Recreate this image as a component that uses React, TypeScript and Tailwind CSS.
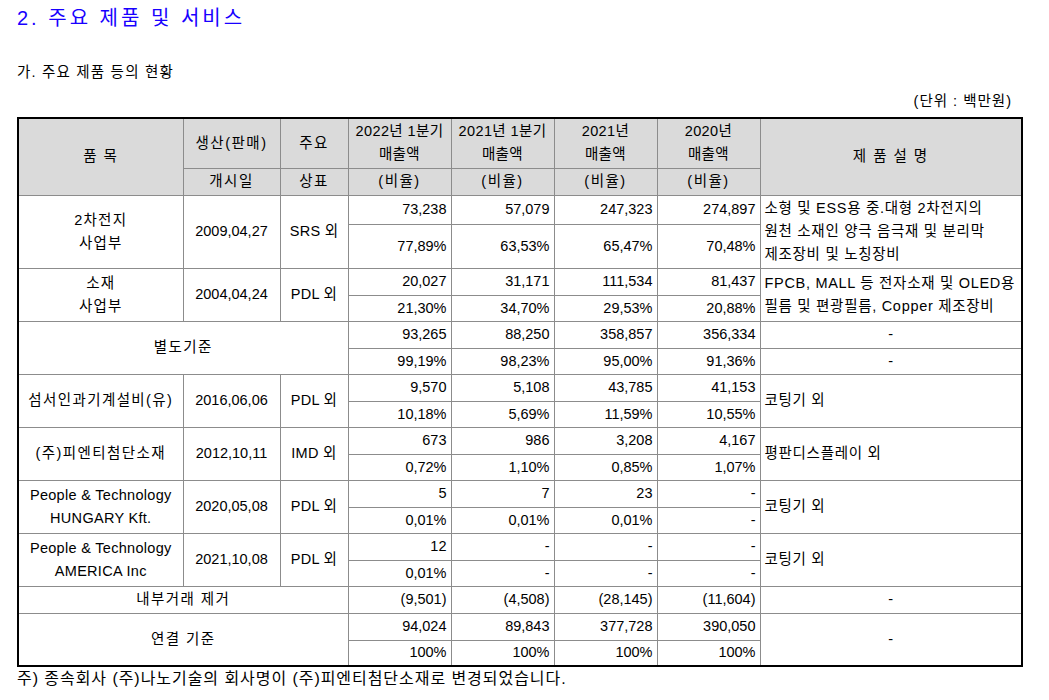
import React from 'react';

type Group = {
  name: React.ReactNode;
  nameTrack: string;
  date: string;
  brand: string;
  sales: string[];
  ratio: string[];
  desc: React.ReactNode;
  heights: [string, string];
};

const cell = 'border border-[#8c8c8c] px-[4px] leading-[23px] whitespace-nowrap';
const head = `${cell} bg-[#dadada] text-center font-normal`;
const num = `${cell} text-right`;

const groups: Group[] = [
  {
    name: <>2차전지<br />사업부</>,
    nameTrack: 'tracking-[1.2px]',
    date: '2009,04,27',
    brand: 'SRS 외',
    sales: ['73,238', '57,079', '247,323', '274,897'],
    ratio: ['77,89%', '63,53%', '65,47%', '70,48%'],
    desc: <>소형 및 ESS용 중.대형 2차전지의<br />원천 소재인 양극 음극재 및 분리막<br />제조장비 및 노칭장비</>,
    heights: ['h-[29px]', 'h-[44px]'],
  },
  {
    name: <>소재<br />사업부</>,
    nameTrack: 'tracking-[1.2px]',
    date: '2004,04,24',
    brand: 'PDL 외',
    sales: ['20,027', '31,171', '111,534', '81,437'],
    ratio: ['21,30%', '34,70%', '29,53%', '20,88%'],
    desc: <>FPCB, MALL 등 전자소재 및 OLED용<br />필름 및 편광필름, Copper 제조장비</>,
    heights: ['h-[27px]', 'h-[26px]'],
  },
];

const subs: Group[] = [
  {
    name: '섬서인과기계설비(유)',
    nameTrack: 'tracking-[1.4px]',
    date: '2016,06,06',
    brand: 'PDL 외',
    sales: ['9,570', '5,108', '43,785', '41,153'],
    ratio: ['10,18%', '5,69%', '11,59%', '10,55%'],
    desc: '코팅기 외',
    heights: ['h-[27px]', 'h-[26px]'],
  },
  {
    name: '(주)피엔티첨단소재',
    nameTrack: 'tracking-[1.4px]',
    date: '2012,10,11',
    brand: 'IMD 외',
    sales: ['673', '986', '3,208', '4,167'],
    ratio: ['0,72%', '1,10%', '0,85%', '1,07%'],
    desc: '평판디스플레이 외',
    heights: ['h-[27px]', 'h-[26px]'],
  },
  {
    name: <>People &amp; Technology<br />HUNGARY Kft.</>,
    nameTrack: 'tracking-[0.3px]',
    date: '2020,05,08',
    brand: 'PDL 외',
    sales: ['5', '7', '23', '-'],
    ratio: ['0,01%', '0,01%', '0,01%', '-'],
    desc: '코팅기 외',
    heights: ['h-[27px]', 'h-[26px]'],
  },
  {
    name: <>People &amp; Technology<br />AMERICA Inc</>,
    nameTrack: 'tracking-[0.3px]',
    date: '2021,10,08',
    brand: 'PDL 외',
    sales: ['12', '-', '-', '-'],
    ratio: ['0,01%', '-', '-', '-'],
    desc: '코팅기 외',
    heights: ['h-[27px]', 'h-[26px]'],
  },
];

function GroupRows({ g }: { g: Group }) {
  return (
    <>
      <tr className={g.heights[0]}>
        <td rowSpan={2} className={`${cell} text-center ${g.nameTrack}`}>{g.name}</td>
        <td rowSpan={2} className={`${cell} text-center`}>{g.date}</td>
        <td rowSpan={2} className={`${cell} text-center tracking-[0.3px]`}>{g.brand}</td>
        {g.sales.map((v, i) => (
          <td key={i} className={num}>{v}</td>
        ))}
        <td rowSpan={2} className={`${cell} text-left tracking-[0.7px]`}>{g.desc}</td>
      </tr>
      <tr className={g.heights[1]}>
        {g.ratio.map((v, i) => (
          <td key={i} className={num}>{v}</td>
        ))}
      </tr>
    </>
  );
}

export default function App() {
  return (
    <div className="min-h-[700px] bg-white pl-[17px] font-['Liberation_Sans','Noto_Sans_CJK_KR',sans-serif] text-[14.5px] text-black">
      <h2 className="pt-[6px] text-[20px] leading-[24px] tracking-[3px] text-[#1800ff]">
        2. 주요 제품 및 서비스
      </h2>

      <p className="mt-[32px] leading-[20px] tracking-[1.2px]">가. 주요 제품 등의 현황</p>

      <p className="mt-[9px] w-[1004px] pr-[9px] text-right leading-[20px] tracking-[1px]">(단위 : 백만원)</p>

      <table className="mt-[6px] w-[1004px] table-fixed border-collapse border-2 border-black">
        <colgroup>
          <col className="w-[165px]" />
          <col className="w-[97px]" />
          <col className="w-[68px]" />
          <col className="w-[103px]" />
          <col className="w-[103px]" />
          <col className="w-[103px]" />
          <col className="w-[103px]" />
          <col className="w-[262px]" />
        </colgroup>
        <thead>
          <tr className="h-[50px]">
            <th rowSpan={2} className={`${head} tracking-[1.5px]`}>품 목</th>
            <th className={`${head} tracking-[1.5px]`}>생산(판매)</th>
            <th className={`${head} tracking-[1.5px]`}>주요</th>
            <th className={`${head} tracking-[0.4px]`}>2022년 1분기<br />매출액</th>
            <th className={`${head} tracking-[0.4px]`}>2021년 1분기<br />매출액</th>
            <th className={`${head} tracking-[0.4px]`}>2021년<br />매출액</th>
            <th className={`${head} tracking-[0.4px]`}>2020년<br />매출액</th>
            <th rowSpan={2} className={`${head} tracking-[1.5px]`}>제 품 설 명</th>
          </tr>
          <tr className="h-[27px]">
            <th className={`${head} tracking-[1.5px]`}>개시일</th>
            <th className={`${head} tracking-[1.5px]`}>상표</th>
            <th className={`${head} tracking-[1.5px]`}>(비율)</th>
            <th className={`${head} tracking-[1.5px]`}>(비율)</th>
            <th className={`${head} tracking-[1.5px]`}>(비율)</th>
            <th className={`${head} tracking-[1.5px]`}>(비율)</th>
          </tr>
        </thead>
        <tbody>
          {groups.map((g, i) => (
            <GroupRows key={i} g={g} />
          ))}

          {/* 별도기준 */}
          <tr className="h-[27px]">
            <td rowSpan={2} colSpan={3} className={`${cell} text-center tracking-[1.4px]`}>별도기준</td>
            {['93,265', '88,250', '358,857', '356,334'].map((v, i) => (
              <td key={i} className={num}>{v}</td>
            ))}
            <td className={`${cell} text-center`}>-</td>
          </tr>
          <tr className="h-[26px]">
            {['99,19%', '98,23%', '95,00%', '91,36%'].map((v, i) => (
              <td key={i} className={num}>{v}</td>
            ))}
            <td className={`${cell} text-center`}>-</td>
          </tr>

          {subs.map((g, i) => (
            <GroupRows key={i} g={g} />
          ))}

          {/* 내부거래 제거 */}
          <tr className="h-[27px]">
            <td colSpan={3} className={`${cell} text-center tracking-[1.4px]`}>내부거래 제거</td>
            {['(9,501)', '(4,508)', '(28,145)', '(11,604)'].map((v, i) => (
              <td key={i} className={num}>{v}</td>
            ))}
            <td className={`${cell} text-center`}>-</td>
          </tr>

          {/* 연결 기준 */}
          <tr className="h-[27px]">
            <td rowSpan={2} colSpan={3} className={`${cell} text-center tracking-[1.4px]`}>연결 기준</td>
            {['94,024', '89,843', '377,728', '390,050'].map((v, i) => (
              <td key={i} className={num}>{v}</td>
            ))}
            <td rowSpan={2} className={`${cell} text-center`}>-</td>
          </tr>
          <tr className="h-[26px]">
            {['100%', '100%', '100%', '100%'].map((v, i) => (
              <td key={i} className={num}>{v}</td>
            ))}
          </tr>
        </tbody>
      </table>

      <p className="mt-[2px] text-[16px] leading-[20px] tracking-[0.95px]">
        주) 종속회사 (주)나노기술의 회사명이 (주)피엔티첨단소재로 변경되었습니다.
      </p>
    </div>
  );
}
